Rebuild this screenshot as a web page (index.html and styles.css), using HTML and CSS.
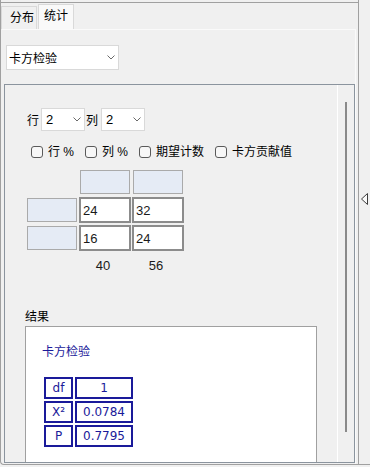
FILE: index.html
```html
<!DOCTYPE html>
<html lang="zh">
<head>
  <meta charset="UTF-8">
  <title>统计</title>
  <link rel="stylesheet" href="styles.css">
</head>
<body>
  <div class="frame">
    <div class="main">
      <div class="tabs">
        <div class="tab first">分布</div>
        <div class="tab active">统计</div>
      </div>

      <div class="page">
        <div class="dropdown">
          <span>卡方检验</span>
          <svg width="8" height="5" viewBox="0 0 8 5"><path d="M0.5 0.5 L4 4 L7.5 0.5" fill="none" stroke="#6a6a6a"/></svg>
        </div>

        <div class="panel">
          <div class="content">
            <div class="sel-row">
              <span class="lbl">行</span>
              <div class="sel"><span>2</span><svg width="8" height="5" viewBox="0 0 8 5"><path d="M0.5 0.5 L4 4 L7.5 0.5" fill="none" stroke="#6a6a6a"/></svg></div>
              <span class="lbl lbl2">列</span>
              <div class="sel"><span>2</span><svg width="8" height="5" viewBox="0 0 8 5"><path d="M0.5 0.5 L4 4 L7.5 0.5" fill="none" stroke="#6a6a6a"/></svg></div>
            </div>

            <div class="cb-row">
              <label class="cb"><span class="box"></span>行 %</label>
              <label class="cb"><span class="box"></span>列 %</label>
              <label class="cb"><span class="box"></span>期望计数</label>
              <label class="cb"><span class="box"></span>卡方贡献值</label>
            </div>

            <div class="grid">
              <div></div>
              <div class="hd"></div>
              <div class="hd"></div>

              <div class="hd"></div>
              <div class="cell">24</div>
              <div class="cell">32</div>

              <div class="hd"></div>
              <div class="cell">16</div>
              <div class="cell">24</div>

              <div></div>
              <div class="tot">40</div>
              <div class="tot">56</div>
            </div>

            <div class="res-label">结果</div>
            <div class="result">
              <div class="res-title">卡方检验</div>
              <div class="stats">
                <div class="st">df</div><div class="st">1</div>
                <div class="st">X²</div><div class="st">0.0784</div>
                <div class="st">P</div><div class="st">0.7795</div>
              </div>
            </div>
          </div>
          <div class="scroll"><div class="thumb"></div></div>
        </div>
      </div>
    </div>

    <div class="side">
      <svg width="8" height="12" viewBox="0 0 8 12"><path d="M6.5 0.5 L0.5 6 L6.5 11.5 Z" fill="#fafafa" stroke="#3c3c3c"/></svg>
    </div>
  </div>
</body>
</html>
```

FILE: styles.css
```css
* {
  box-sizing: border-box;
}
body {
  margin: 0;
  background-color: #f0f0f0;
  font-family: "Liberation Sans", "Noto Sans CJK SC", sans-serif;
  font-size: 12px;
  color: #000;
}
.frame {
  display: flex;
  width: 370px;
  height: 465px;
  border-left: 1px solid #a0a0a0;
  border-bottom: 1px solid #a0a0a0;
  border-bottom-left-radius: 4px;
}
.main {
  width: 358px;
  display: flex;
  flex-direction: column;
  border-right: 1px solid #a0a0a0;
}

/* tabs */
.tabs {
  margin-top: 2px;
  height: 27px;
  border-top: 1px solid #a0a0a0;
  display: flex;
  align-items: flex-end;
}
.tab {
  border: 1px solid #d9d9d9;
  border-bottom: none;
  line-height: 22px;
}
.tab.first {
  height: 23px;
  padding: 0 2px 0 8px;
}
.tab.active {
  height: 25px;
  padding: 0 5px;
  margin-left: 1px;
  background-color: #f9f9f9;
}

.page {
  flex: 1;
  width: 354px;
  margin-left: 1px;
  border-top: 1px solid #fafafa;
  border-right: 1px solid #fafafa;
}
.dropdown {
  margin: 15px 0 0 4px;
  width: 113px;
  height: 25px;
  background-color: #fff;
  border: 1px solid #d9d9d9;
  display: flex;
  align-items: center;
  justify-content: space-between;
  padding: 0 3px 0 2px;
  font-size: 12px;
}

.panel {
  margin: 14px 0 0 2px;
  width: 351px;
  height: 379px;
  border: 1px solid #8b949e;
  display: flex;
}
.content {
  flex: 1;
  overflow: hidden;
}
.scroll {
  width: 17px;
  border-left: 1px solid #fff;
  padding: 17px 0 0 7px;
}
.thumb {
  width: 2px;
  height: 330px;
  background-color: #8a8a8a;
}

/* controls */
.sel-row {
  display: flex;
  align-items: center;
  height: 23px;
  margin: 23px 0 0 22px;
}
.lbl {
  margin-right: 2px;
}
.lbl2 {
  margin: 0 3px 0 1px;
}
.sel {
  width: 44px;
  height: 23px;
  background-color: #fff;
  border: 1px solid #d9d9d9;
  display: flex;
  align-items: center;
  justify-content: space-between;
  padding: 0 3px 0 4px;
  font-size: 13px;
}

.cb-row {
  display: flex;
  align-items: center;
  height: 12px;
  margin: 15px 0 0 26px;
}
.cb {
  display: flex;
  align-items: center;
  margin-right: 11px;
  line-height: 14px;
}
.box {
  width: 12px;
  height: 12px;
  border: 1px solid #5a5a5a;
  border-radius: 3px;
  background-color: #f7f7f7;
  margin-right: 5px;
}

.grid {
  display: grid;
  grid-template-columns: 50px 50px 50px;
  grid-template-rows: 24px 24px 24px 24px;
  gap: 4px 3px;
  margin: 12px 0 0 22px;
}
.hd {
  border: 1px solid #aaaaaa;
  background-color: #e5ebf5;
}
.cell {
  margin: -1px;
  border: 2px solid #8c8c8c;
  background-color: #fff;
  padding-left: 2px;
  display: flex;
  align-items: center;
  font-size: 13px;
  color: #1a1a1a;
}
.tot {
  text-align: center;
  padding-right: 4px;
  line-height: 24px;
  font-size: 13px;
  color: #1a1a1a;
}

/* result */
.res-label {
  margin: 32px 0 0 20px;
  line-height: 14px;
}
.result {
  margin: 2px 0 0 20px;
  width: 292px;
  height: 160px;
  background-color: #fff;
  border: 1px solid #a0a0a0;
}
.res-title {
  margin: 17px 0 0 16px;
  line-height: 16px;
  color: #1a1a9a;
}
.stats {
  display: grid;
  grid-template-columns: 29px 58px;
  grid-template-rows: 22px 22px 22px;
  gap: 2px;
  margin: 17px 0 0 18px;
}
.st {
  border: 2px solid #1a1a9a;
  color: #1a1a9a;
  font-family: "DejaVu Sans", sans-serif;
  font-size: 12px;
  line-height: 18px;
  text-align: center;
}

.side {
  flex: 1;
  padding: 193px 0 0 2px;
}
.side svg {
  display: block;
}
```
